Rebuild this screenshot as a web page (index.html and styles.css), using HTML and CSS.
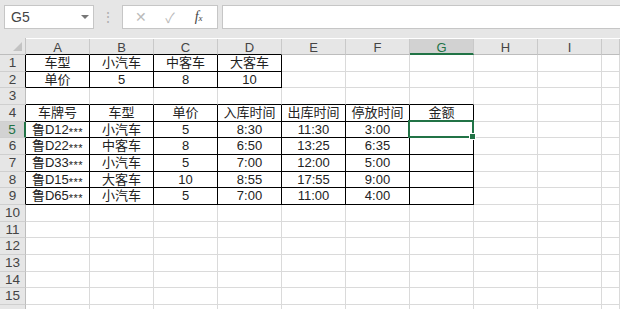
FILE: index.html
```html
<!DOCTYPE html>
<html lang="zh-CN">
<head>
  <meta charset="UTF-8">
  <title>停车收费表</title>
  <link rel="stylesheet" href="styles.css">
</head>
<body>
<div class="topbar">
  <div class="namebox">
    <span>G5</span>
    <span class="arrow"></span>
  </div>
  <div class="grip">⋮</div>
  <div class="fxbox">
    <span class="btn cancel">✕</span>
    <span class="btn ok">✓</span>
    <span class="btn fx">f<sub>x</sub></span>
  </div>
  <div class="formula"></div>
</div>
<div class="sheet" id="sheet"></div>

<script>
const cols = ['A','B','C','D','E','F','G','H','I',''];
const data = [
  ['车型','小汽车','中客车','大客车'],
  ['单价','5','8','10'],
  [],
  ['车牌号','车型','单价','入库时间','出库时间','停放时间','金额'],
  ['鲁D12***','小汽车','5','8:30','11:30','3:00',''],
  ['鲁D22***','中客车','8','6:50','13:25','6:35',''],
  ['鲁D33***','小汽车','5','7:00','12:00','5:00',''],
  ['鲁D15***','大客车','10','8:55','17:55','9:00',''],
  ['鲁D65***','小汽车','5','7:00','11:00','4:00','']
];
const sheet = document.getElementById('sheet');

// 罫線のある範囲
function boxed(r, c) {
  if (r >= 1 && r <= 2 && c <= 3) return true;
  if (r >= 4 && r <= 9 && c <= 6) return true;
  return false;
}

function cellText(t) {
  // ナンバーの *** は小さく
  return t.replace(/\*+/, m => `<span class="star">${m}</span>`);
}

let html = '<div class="corner"><span class="tri"></span></div>';
cols.forEach((c, i) => {
  let cls = 'colhead';
  if (c === 'G') cls += ' sel';
  if (i < 4) cls += ' bb'; // 1行目の上の罫線
  html += `<div class="${cls}">${c}</div>`;
});

for (let r = 1; r <= 16; r++) {
  let rcls = 'rowhead';
  if (boxed(r, 0)) rcls += ' br';
  if (r === 5) rcls += ' sel';
  // 16行目は画面下端で切れるので番号なし
  html += `<div class="${rcls}">${r < 16 ? r : ''}</div>`;
  const row = data[r - 1] || [];
  for (let c = 0; c < cols.length; c++) {
    let cls = 'cell';
    if (boxed(r, c)) cls += ' b';
    else if (boxed(r + 1, c)) cls += ' bb';
    else if (boxed(r, c + 1)) cls += ' bl';
    let inner = row[c] ? cellText(row[c]) : '';
    if (r === 5 && c === 6) inner = '<span class="cursor"><span class="handle"></span></span>';
    html += `<div class="${cls}">${inner}</div>`;
  }
}
sheet.innerHTML = html;
</script>
</body>
</html>
```

FILE: styles.css
```css
body { margin: 0; padding: 0; width: 620px; height: 309px; overflow: hidden; background: #fff; font-family: "Liberation Sans", "Noto Sans CJK SC", sans-serif; }
.topbar { height: 38px; background: #e6e6e6; display: flex; align-items: flex-start; padding: 5px 0 0 4px; box-sizing: border-box; }
.namebox { width: 90px; height: 24px; box-sizing: border-box; background: #fff; border: 1px solid #c6c6c6; display: flex; align-items: center; justify-content: space-between; padding: 0 4px 0 6px; font-size: 14px; color: #444; }
.arrow { width: 0; height: 0; border-left: 4px solid transparent; border-right: 4px solid transparent; border-top: 4px solid #777; }
.grip { width: 28px; text-align: center; color: #b0b0b0; font-size: 14px; line-height: 24px; }
.fxbox { width: 96px; height: 24px; box-sizing: border-box; background: #fff; border: 1px solid #c6c6c6; display: flex; align-items: center; justify-content: space-around; padding: 0 4px; }
.btn { font-size: 14px; color: #bbb; width: 20px; text-align: center; }
.btn.fx { font-family: "Liberation Serif", serif; font-style: italic; color: #444; font-size: 14px; }
.btn.fx sub { font-size: 9px; vertical-align: 0; }
.formula { flex: 1; height: 24px; margin-left: 4px; box-sizing: border-box; background: #fff; border: 1px solid #c6c6c6; border-right: none; }

.sheet { display: grid; grid-template-columns: 26px repeat(9, 64px) 1fr; grid-template-rows: 17px; grid-auto-rows: 16.67px; background: #fff; }
.corner { background: #e6e6e6; border-right: 1px solid #c3c3c3; border-bottom: 1px solid #bdbdbd; box-sizing: border-box; position: relative; }
.tri { position: absolute; right: 3px; bottom: 3px; width: 0; height: 0; border-left: 9px solid transparent; border-bottom: 9px solid #c3c3c3; }
.colhead { background: #e6e6e6; border-right: 1px solid #c9c9c9; border-bottom: 1px solid #bdbdbd; box-sizing: border-box; text-align: center; font-size: 13px; line-height: 17px; color: #444; margin-top: 1px; }
.colhead.sel { background: #d2d2d2; border-bottom: 2px solid #217346; color: #217346; }
.colhead.bb { border-bottom-color: #000; }
.rowhead { background: #e6e6e6; border-right: 1px solid #bdbdbd; border-bottom: 1px solid #cfcfcf; box-sizing: border-box; text-align: center; font-size: 13.5px; line-height: 16px; color: #444; overflow: hidden; }
.rowhead.br { border-right-color: #000; }
.rowhead.sel { background: #d2d2d2; border-right: 2px solid #217346; color: #217346; }
.cell { border-right: 1px solid #dadada; border-bottom: 1px solid #dadada; box-sizing: border-box; text-align: center; font-size: 13px; line-height: 16px; color: #222; white-space: nowrap; overflow: visible; position: relative; }
.cell.b { border-right-color: #000; border-bottom-color: #000; }
.cell.bb { border-bottom-color: #000; }
.cell.bl { border-right-color: #000; }
.star { font-size: 11px; letter-spacing: 0.5px; vertical-align: -2px; }
.cursor { position: absolute; left: -2px; top: -2px; right: -1px; bottom: -1px; border: 2px solid #217346; z-index: 2; }
.handle { position: absolute; right: -4px; bottom: -4px; width: 5px; height: 5px; background: #217346; border: 1px solid #fff; }
```
